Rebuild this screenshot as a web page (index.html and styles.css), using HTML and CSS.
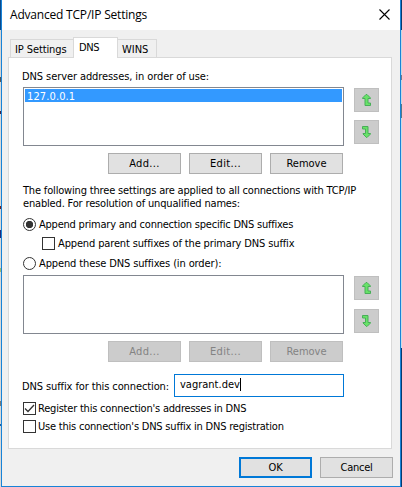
FILE: index.html
```html
<!DOCTYPE html>
<html lang="en">
<head>
<meta charset="utf-8">
<title>Advanced TCP/IP Settings</title>
<link rel="stylesheet" href="styles.css">
</head>
<body>
<svg width="0" height="0" class="defs">
  <symbol id="up" viewBox="0 0 9 12"><path d="M4 .5.5 4v.5H3v7h5.500v-2.500H6V4.500h2.500V4L5 .5z"/></symbol>
  <symbol id="down" viewBox="0 0 9 12"><path d="M.5.5h5.500v7h2.500V8L5 11.500H4.500L1 8v-.5h2.500v-4.500h-3z"/></symbol>
</svg>
<div class="desktop">
  <div class="dialog">
    <header class="titlebar">
      <h1 class="title">Advanced TCP/IP Settings</h1>
      <svg class="close" width="11" height="11" viewBox="0 0 11 11"><path d="M.5.5l10 10M10.5.5l-10 10"/></svg>
    </header>
    <div class="tabs">
      <div class="tab tab-ip"><span class="t-ip">IP Settings</span></div>
      <div class="tab active"><span class="t-dns">DNS</span></div>
      <div class="tab tab-wins"><span class="t-wins">WINS</span></div>
    </div>
    <main class="panel">
      <div class="label servers"><span class="t-servers">DNS server addresses, in order of use:</span></div>
      <div class="listrow">
        <div class="list"><div class="selected"><span class="t-ipaddr">127.0.0.1</span></div></div>
        <div class="arrows">
          <div class="arrow"><svg width="9" height="12"><use href="#up"/></svg></div>
          <div class="arrow"><svg width="9" height="12"><use href="#down"/></svg></div>
        </div>
      </div>
      <div class="buttons">
        <div class="btn"><span class="t-add">Add...</span></div>
        <div class="btn"><span class="t-edit">Edit...</span></div>
        <div class="btn"><span class="t-remove">Remove</span></div>
      </div>
      <div class="note"><span class="t-note">The following three settings are applied to all connections with TCP/IP</span><br><span class="t-note">enabled. For resolution of unqualified names:</span></div>
      <div class="option o1"><i class="radio on"></i><span class="t-o1">Append primary and connection specific DNS suffixes</span></div>
      <div class="option o2"><i class="check"></i><span class="t-o2">Append parent suffixes of the primary DNS suffix</span></div>
      <div class="option o3"><i class="radio"></i><span class="t-o3">Append these DNS suffixes (in order):</span></div>
      <div class="listrow second">
        <div class="list"></div>
        <div class="arrows">
          <div class="arrow"><svg width="9" height="12"><use href="#up"/></svg></div>
          <div class="arrow"><svg width="9" height="12"><use href="#down"/></svg></div>
        </div>
      </div>
      <div class="buttons">
        <div class="btn disabled"><span class="t-add">Add...</span></div>
        <div class="btn disabled"><span class="t-edit">Edit...</span></div>
        <div class="btn disabled"><span class="t-remove">Remove</span></div>
      </div>
      <div class="suffix">
        <div class="suffix-label"><span class="t-suffix">DNS suffix for this connection:</span></div>
        <div class="input"><span class="t-value">vagrant.dev</span><i class="caret"></i></div>
      </div>
      <div class="option o4"><i class="check"><svg width="11" height="11" viewBox="0 0 11 11"><path d="M1 5.5l3 3L10 2"/></svg></i><span class="t-o4">Register this connection's addresses in DNS</span></div>
      <div class="option o5"><i class="check"></i><span class="t-o5">Use this connection's DNS suffix in DNS registration</span></div>
    </main>
    <footer class="footer">
      <div class="btn primary"><span class="t-ok">OK</span></div>
      <div class="btn"><span class="t-cancel">Cancel</span></div>
    </footer>
  </div>
</div>
</body>
</html>
```
FILE: styles.css
```css
* { box-sizing: border-box; }
body {
  margin: 0;
  font: 11px/13px "DejaVu Sans Condensed", "DejaVu Sans", sans-serif;
  font-stretch: condensed;
  color: #000;
}
span { white-space: nowrap; }
.defs { display: block; }
.desktop {
  width: 402px;
  height: 487px;
  padding: 0 1px;
  background:
    linear-gradient(#0b4a8c 0 30px, #d4d4d4 30px 77px, #555 77px 82px, #d8d8d8 82px 111px, #402040 111px 114px, #d8d8d8 114px 206px, #702020 206px 209px, #d8d8d8 209px 230px, #202878 230px 238px, #d8d8d8 238px 268px, #9aba70 268px 272px, #d8d8d8 272px 401px, #777 401px 406px, #d8d8d8 406px 424px, #2060a0 424px 426px, #d8d8d8 426px) left / 1px 100% no-repeat,
    linear-gradient(#063a70 0 30px, #c4d8e4 30px 75px, #778 75px 80px, #c4d8e4 80px 104px, #578 104px 118px, #c8dce8 118px 348px, #063a70 348px) right / 1px 100% no-repeat;
}
.dialog {
  height: 487px;
  border: solid #1883d7;
  border-width: 0 1px 1px;
  background: #f0f0f0;
}
.titlebar {
  display: flex;
  justify-content: space-between;
  height: 30px;
  padding: 8px 10px 0 8px;
  background: #fff;
}
.title { margin: 0; font: 12px/14px "Open Sans", "Noto Sans", sans-serif; letter-spacing: -.2px; white-space: nowrap; }
.close { margin-top: 1px; fill: none; stroke: #000; stroke-width: 1.1; }
.tabs { display: flex; align-items: flex-end; height: 28px; padding-left: 8px; }
.tab {
  height: 19px;
  border: 1px solid #d9d9d9;
  padding: 3px 0 0 4px;
}
.tab-ip { width: 63px; }
.tab-wins { width: 39px; padding-left: 4px; }
.active {
  z-index: 1;
  width: 45px;
  height: 21px;
  border-bottom: 0;
  padding-left: 5px;
  background: #fff;
}
.tab-ip { border-right: 0; }
.tab-wins { border-left: 0; }
.panel {
  width: 384px;
  height: 392px;
  margin: -1px 0 0 6px;
  border: 1px solid #d9d9d9;
  padding: 12px 0 0 14px;
  background: #fff;
}
.label { height: 17px; }
.listrow { display: flex; gap: 10px; height: 59px; }
.list { width: 321px; border: 1px solid #828790; padding: 1px; background: #fff; }
.selected { height: 13px; padding-left: 2px; line-height: 15px; background: #3399ff; color: #fff; }
.arrows { display: flex; flex-direction: column; gap: 8px; padding-top: 1px; }
.second .arrows { gap: 9px; }
.arrow {
  display: flex;
  align-items: center;
  justify-content: center;
  width: 25px;
  height: 24px;
  border: 1px solid #bfbfbf;
  background: #ccc;
}
.arrow svg { fill: #68e268; stroke: #48ae58; }
.buttons { display: flex; gap: 8px; padding: 7px 0 0 85px; }
.btn {
  display: flex;
  align-items: center;
  justify-content: center;
  width: 73px;
  height: 21px;
  border: 1px solid #adadad;
  background: #e1e1e1;
}
.disabled { border-color: #bfbfbf; background: #ccc; color: #838383; }
.primary { border: 2px solid #0078d7; }
.note { height: 44px; padding-top: 10px; }
.option { display: flex; gap: 3px; height: 13px; }
.o2 { margin: 6px 0 7px 19px; }
.radio, .check { flex: none; width: 13px; height: 13px; border: 1px solid #333; background: #fff; }
.radio { border-radius: 50%; }
.on { background: radial-gradient(circle, #333 0 3.4px, #fff 4px); }
.check svg { display: block; fill: none; stroke: #333; stroke-width: 1.3; }
.second { margin-top: 5px; }
.suffix { display: flex; margin-top: 12px; height: 23px; }
.suffix-label { width: 151px; padding-top: 6px; }
.input { display: flex; width: 170px; border: 1px solid #0078d7; padding: 3px 0 0 5px; }
.caret { width: 1px; height: 13px; background: #000; }
.o4 { margin: 5px 0; }
.o4, .o5 { gap: 2px; }
.footer { display: flex; justify-content: flex-end; gap: 8px; padding: 8px 7px 0 0; }

.t-ip { letter-spacing: -.1px; }
.t-dns { letter-spacing: -.4px; }
.t-servers { margin-left: -1px; letter-spacing: -.09px; }
.t-ipaddr { letter-spacing: .12px; }
.t-add, .t-edit { letter-spacing: .35px; }
.t-note { letter-spacing: -.17px; }
.t-o1 { letter-spacing: -.22px; }
.t-o2 { letter-spacing: -.14px; }
.t-o3 { letter-spacing: -.12px; }
.t-suffix { margin-left: -1px; letter-spacing: -.11px; }
.t-o4 { letter-spacing: -.21px; }
.t-o5 { letter-spacing: -.21px; }
.t-ok, .t-cancel { letter-spacing: -.25px; }
```
